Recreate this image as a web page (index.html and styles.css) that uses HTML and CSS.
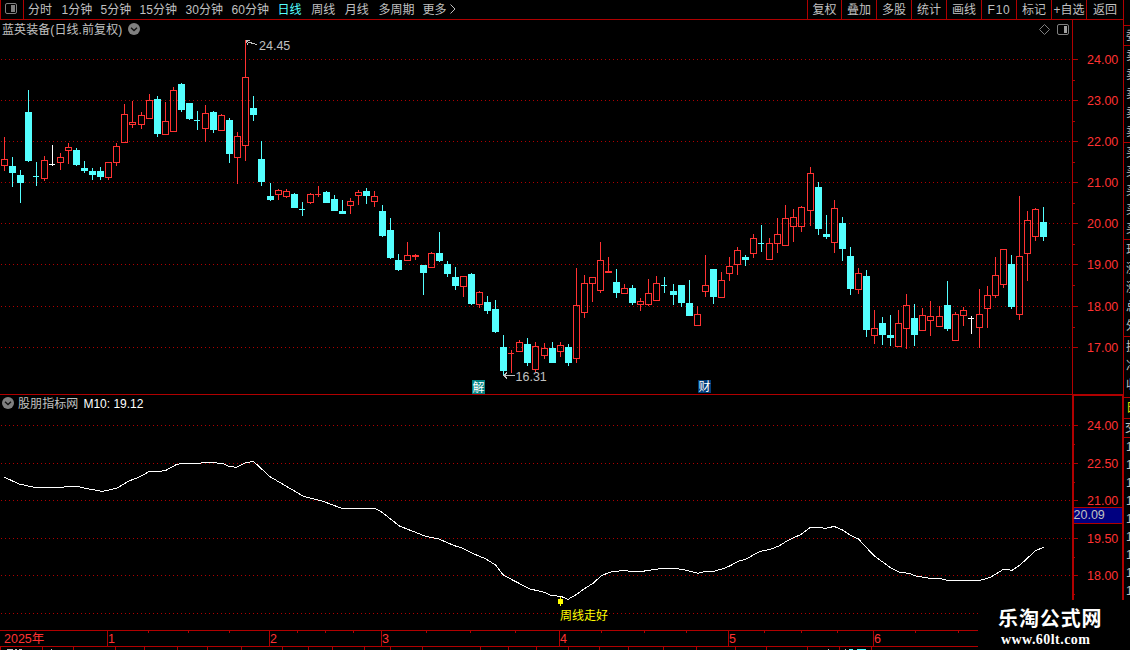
FILE: index.html
```html
<!DOCTYPE html>
<html lang="zh-CN">
<head>
  <meta charset="UTF-8">
  <meta name="viewport" content="width=device-width, initial-scale=1.0">
  <title>蓝英装备 日线</title>
  <link rel="stylesheet" href="styles.css">
</head>
<body>

  <header class="toolbar">
    <div class="layout-btn">
      <svg width="12" height="12" viewBox="0 0 12 12">
        <rect x="0.5" y="0.5" width="11" height="10" rx="1.5" fill="none" stroke="#808080"/>
        <rect x="6" y="2" width="4" height="7" fill="#808080"/>
      </svg>
    </div>
    <nav class="periods">
      <a class="w2">分时</a>
      <a class="w3">1分钟</a>
      <a class="w3">5分钟</a>
      <a class="w4">15分钟</a>
      <a class="w4">30分钟</a>
      <a class="w4">60分钟</a>
      <a class="w2 active">日线</a>
      <a class="w2">周线</a>
      <a class="w2">月线</a>
      <a class="w5">多周期</a>
      <a class="w6">更多</a>
      <svg class="more" width="8" height="10" viewBox="0 0 8 10">
        <path d="M1.5 0.5 L6 5 L1.5 9.5" fill="none" stroke="#c0c0c0"/>
      </svg>
    </nav>
    <nav class="tools">
      <a class="narrow">复权</a>
      <a>叠加</a>
      <a>多股</a>
      <a>统计</a>
      <a>画线</a>
      <a class="latin">F10</a>
      <a>标记</a>
      <a>+自选</a>
      <a class="wide">返回</a>
    </nav>
    <div class="corner"></div>
  </header>

  <main class="workspace">
    <div class="charts">
      <section class="pane">
        <svg id="kline" width="1124" height="375" viewBox="0 20 1124 375"></svg>
        <div class="pane-title">
          <span>蓝英装备(日线.前复权)</span>
          <svg class="toggle" width="12" height="12" viewBox="0 0 12 12">
            <circle cx="6" cy="6" r="6" fill="#808080"/>
            <path d="M3 4.8 L6 7.6 L9 4.8" fill="none" stroke="#101010" stroke-width="1.3"/>
          </svg>
        </div>
        <div class="pane-icons">
          <svg width="12" height="12" viewBox="0 0 12 12">
            <path d="M6.5 0.5 L11.5 5.5 L6.5 10.5 L1.5 5.5 Z" fill="none" stroke="#808080"/>
          </svg>
          <svg width="12" height="12" viewBox="0 0 12 12">
            <rect x="0.5" y="0.5" width="11" height="10" rx="1.5" fill="none" stroke="#808080"/>
            <rect x="7" y="2" width="3" height="7" fill="#a0a0a0"/>
          </svg>
        </div>
      </section>

      <section class="pane">
        <svg id="indicator" width="1124" height="255" viewBox="0 395 1124 255"></svg>
        <div class="pane-title sub">
          <svg width="12" height="12" viewBox="0 0 12 12">
            <circle cx="6" cy="6" r="6" fill="#808080"/>
            <path d="M3 4.8 L6 7.6 L9 4.8" fill="none" stroke="#101010" stroke-width="1.3"/>
          </svg>
          <span class="name">股朋指标网</span>
          <span class="value">M10: 19.12</span>
        </div>
      </section>
    </div>

    <aside class="quotes">
      <div class="block ratio"><p>委</p></div>
      <div class="block"><p>卖</p><p>卖</p><p>卖</p><p>卖</p><p>卖</p></div>
      <div class="block"><p>买</p><p>买</p><p>买</p><p>买</p><p>买</p></div>
      <div class="block"><p>现</p><p>涨</p><p>涨</p><p>总</p><p>外</p></div>
      <div class="block short"><p>换</p><p>净</p><p>收</p></div>
      <div class="block tab"><p>日</p></div>
      <div class="block deal"><p>交</p></div>
      <div class="block ticks"><p>14</p><p>14</p><p>14</p><p>14</p><p>14</p><p>14</p><p>14</p><p>14</p><p>14</p></div>
    </aside>
  </main>

  <div class="watermark">
    <strong>乐淘公式网</strong>
    <span>www.60lt.com</span>
  </div>

  <script src="chart.js"></script>
</body>
</html>
```

FILE: styles.css
```css
* {
  box-sizing: border-box;
}

body {
  margin: 0;
  width: 1130px;
  height: 650px;
  overflow: hidden;
  background: #000;
  color: #c0c0c0;
  font-family: "Liberation Sans", "Noto Sans CJK SC", sans-serif;
  font-size: 12px;
  position: relative;
}

svg {
  display: block;
}

/* toolbar */
.toolbar {
  display: flex;
  height: 20px;
}

.layout-btn {
  width: 24px;
  padding: 3px 0 0 4px;
  border: solid #b00000;
  border-width: 0 1px 1px;
}

.periods {
  flex: 1;
  display: flex;
  gap: 9px;
  padding-left: 4px;
  line-height: 20px;
  white-space: nowrap;
  border-bottom: 1px solid #b00000;
}

.periods .w2 { width: 24.6px; }
.periods .w3 { width: 30px; }
.periods .w4 { width: 37px; }
.periods .w5 { width: 35px; }
.periods .w6 { width: 18px; }

.periods .active {
  color: #54ffff;
}

.more {
  margin-top: 4px;
}

.tools {
  display: flex;
  line-height: 20px;
  border-bottom: 1px solid #b00000;
}

.tools a {
  width: 35px;
  border-left: 1px solid #b00000;
  text-align: center;
  white-space: nowrap;
}

.tools .narrow { width: 34px; }
.tools .wide { width: 37px; }
.tools .latin { letter-spacing: 0.7px; }

.corner {
  width: 7px;
  border-left: 1px solid #b00000;
}

/* charts */
.workspace {
  display: flex;
  height: 630px;
}

.charts {
  width: 1124px;
}

.pane {
  position: relative;
}

.pane-title {
  position: absolute;
  left: 2px;
  top: 2px;
  display: flex;
  gap: 6px;
  line-height: 16px;
}

.pane-title span {
  letter-spacing: 0.08px;
}

.pane-title svg {
  margin-top: 1px;
}

.pane-title.sub {
  top: 1px;
  gap: 4px;
}

.pane-title .value {
  color: #fff;
  letter-spacing: 0;
  margin-left: 1px;
}

.pane-icons {
  position: absolute;
  left: 1038px;
  top: 4px;
  display: flex;
  gap: 7px;
}

#kline,
#indicator {
  shape-rendering: crispEdges;
}

.axis-label {
  fill: #ff3232;
  font-size: 12.5px;
}

.note {
  fill: #c0c0c0;
  font-size: 12.5px;
}

.signal {
  fill: #ffff00;
}

.badge {
  fill: #fff;
  font-size: 12px;
}

/* quotes panel, cut off by the window edge */
.quotes {
  width: 6px;
  height: 580px;
  overflow: hidden;
  padding-top: 5px;
}

.block {
  height: 97px;
  padding: 1px 0 0 2px;
  border-top: 1px solid #b00000;
  overflow: hidden;
}

.block p {
  margin: 0;
  width: 14px;
  height: 19px;
  line-height: 19px;
}

.ratio { height: 20px; }
.short { height: 61px; }
.tab { height: 21px; color: #e0e000; }
.deal { height: 19px; padding-left: 1px; }
.deal p { line-height: 16px; }
.ticks { height: 170px; }
.ticks p { height: 18px; line-height: 17px; }

.watermark {
  position: absolute;
  left: 978px;
  top: 600px;
  width: 152px;
  height: 50px;
  padding: 7px 0 0 20px;
  background: #000;
  color: #fff;
}

.watermark strong {
  display: block;
  font-size: 20px;
  line-height: 24px;
  letter-spacing: 0.9px;
  white-space: nowrap;
}

.watermark span {
  display: block;
  margin-left: 3px;
  font: bold 14px/17px "Liberation Serif", serif;
  letter-spacing: 0.45px;
}
```

FILE: chart.js
```javascript
const RED = '#ff3232';
const CYAN = '#54ffff';
const LINE = '#b00000';

// x, high, body top, body bottom, low, kind (r = up, c = down, w = flat)
const candles = [
  [4,137,159,166,171,'r'],[12,157,166,173,187,'c'],[20,170,175,183,203,'c'],[28,90,112,161,162,'c'],
  [36,162,176,177,186,'c'],[44,156,160,179,181,'r'],[52,145,164,165,166,'w'],[60,153,157,163,170,'r'],
  [68,143,147,151,164,'r'],[76,148,150,165,166,'c'],[84,161,168,171,173,'c'],[92,168,171,175,180,'c'],
  [100,167,171,177,180,'c'],[108,162,162,178,180,'r'],[116,143,146,163,166,'r'],[124,104,114,143,143,'r'],
  [132,101,122,125,128,'r'],[141,112,115,125,129,'r'],[149,94,100,119,119,'r'],[157,96,99,134,137,'c'],
  [165,102,121,135,135,'r'],[173,87,90,132,132,'r'],[181,83,84,110,112,'c'],[189,103,103,119,120,'c'],
  [197,111,120,121,130,'c'],[205,105,113,129,142,'r'],[213,111,112,130,133,'c'],[221,114,115,131,131,'r'],
  [229,118,120,154,163,'c'],[237,132,136,158,184,'r'],[245,40,77,146,161,'r'],[253,96,108,115,121,'c'],
  [261,141,159,182,186,'c'],[270,183,196,200,201,'c'],[278,189,190,195,200,'r'],[286,189,191,197,198,'r'],
  [294,193,194,208,208,'c'],[302,202,209,210,216,'c'],[310,193,194,203,204,'r'],[318,186,194,195,197,'r'],
  [326,191,192,203,203,'c'],[334,195,199,211,211,'c'],[342,200,211,214,214,'c'],[350,198,201,206,214,'r'],
  [358,190,192,196,205,'r'],[366,188,191,196,204,'c'],[374,191,196,202,207,'r'],[382,205,211,236,237,'c'],
  [390,218,230,258,259,'c'],[398,254,260,270,271,'c'],[407,242,255,261,261,'r'],[415,254,255,257,260,'r'],
  [423,265,265,273,295,'c'],[431,252,253,268,268,'r'],[439,232,253,261,262,'c'],[447,261,264,274,277,'c'],
  [455,267,277,286,290,'c'],[463,276,276,287,297,'r'],[471,273,274,304,305,'c'],[479,291,292,305,308,'r'],
  [487,296,302,311,314,'c'],[495,300,309,332,333,'c'],[503,335,347,371,376,'c'],[511,350,353,354,373,'r'],
  [519,340,342,352,352,'r'],[527,338,344,363,366,'c'],[535,342,346,370,372,'r'],[544,343,348,356,359,'r'],
  [552,342,348,363,363,'c'],[560,342,345,352,357,'r'],[568,344,347,363,366,'c'],[576,268,305,359,363,'r'],
  [584,275,283,313,318,'r'],[592,277,277,284,302,'r'],[600,242,260,291,293,'r'],[608,257,271,273,273,'r'],
  [616,269,282,293,298,'c'],[624,284,288,294,294,'r'],[632,285,288,303,305,'c'],[640,298,301,305,311,'r'],
  [648,279,293,305,306,'r'],[656,276,283,301,301,'r'],[664,277,285,286,293,'c'],[673,284,291,295,305,'c'],
  [681,285,285,303,307,'c'],[689,280,303,316,316,'c'],[697,306,314,326,326,'r'],[705,255,285,292,297,'r'],
  [713,269,269,297,304,'c'],[721,272,280,298,298,'r'],[729,257,266,274,281,'r'],[737,247,250,265,275,'r'],
  [745,255,257,260,266,'c'],[753,234,238,254,258,'r'],[761,225,243,244,252,'c'],[769,238,243,260,260,'r'],
  [777,218,234,244,253,'r'],[785,205,218,246,246,'r'],[793,209,217,227,242,'r'],[801,206,207,227,232,'r'],
  [810,167,173,211,226,'r'],[818,182,187,229,235,'c'],[826,215,234,237,239,'c'],[834,200,208,243,253,'r'],
  [842,217,223,249,261,'c'],[850,247,256,289,295,'c'],[858,268,273,290,294,'r'],[866,270,276,330,337,'c'],
  [874,310,328,336,344,'r'],[882,317,323,335,345,'c'],[890,315,335,338,346,'c'],[898,310,323,347,347,'r'],
  [906,294,305,329,349,'r'],[914,304,318,335,346,'c'],[922,308,315,331,331,'r'],[930,301,316,321,336,'r'],
  [939,306,316,327,327,'r'],[947,281,305,329,331,'c'],[955,312,314,341,341,'r'],[963,307,310,316,326,'r'],
  [971,316,318,319,334,'w'],[979,289,314,328,348,'r'],[987,286,295,309,328,'r'],[995,257,275,296,298,'r'],
  [1003,249,249,285,288,'r'],[1011,255,264,307,309,'c'],[1019,196,256,315,320,'r'],[1027,211,220,254,281,'r'],
  [1035,208,209,237,241,'r'],[1043,207,222,237,241,'c']
];

const m10 = [
  [4,477],[19,484],[35,487.4],[63,487.4],[66,486.4],[78,486.4],[85,488.3],[102,491.3],[108,490.3],[117,488],
  [129,481],[140,476.7],[149,471.6],[160,471.4],[166,470.3],[176,464.7],[182,463.4],[200,463.4],[203,462.5],
  [210,462.5],[223,463.4],[228,466],[236,467.4],[245.5,462.7],[253.5,461.4],[270,476.7],[303.5,496.3],
  [323,501.3],[342,508.4],[375,508.4],[382,512.3],[399.5,526],[425.5,536.3],[438,538.7],[454.5,545.7],
  [463,548.3],[471,552.7],[486,559],[495.5,565],[503.5,575.3],[519,583.3],[529,588.7],[544,592.3],[551,595.3],
  [561,596.4],[568,599.4],[576,594.7],[584,589],[593,583.3],[602,575.3],[611,572],[624,570.4],[631,571.4],
  [642,571.4],[653,569.7],[663,568.4],[675.5,568.4],[686.6,570.3],[698,573.3],[704.5,571.7],[713.5,571.4],
  [724.5,568.3],[731,565.3],[738,561.3],[745.5,559.3],[760,551.4],[771.5,549],[779.5,545.7],[788,540.3],
  [800.5,534.7],[810,527.6],[820.5,527.4],[825,528.6],[834,526.4],[842,529.7],[850.5,535.3],[858.5,539],
  [874,555.7],[890,567.3],[900,572.5],[910,573.4],[915,575.8],[930,578.4],[940,578.5],[948,580.4],[980,580.4],
  [990,577.5],[1004,569],[1012,570.3],[1020,565],[1036,550.3],[1044,547.3]
];

function rect(x, y, w, h, fill) {
  return `<rect x="${x}" y="${y}" width="${w}" height="${h}" fill="${fill}"/>`;
}

function text(x, y, str, cls) {
  return `<text x="${x}" y="${y}" class="${cls}">${str}</text>`;
}

function grid(y, right) {
  return `<line x1="1" x2="${right}" y1="${y + 0.5}" y2="${y + 0.5}" stroke="${LINE}" stroke-dasharray="1 3"/>`;
}

function candle([x, high, top, bottom, low, kind]) {
  const color = { r: RED, c: CYAN, w: '#ffffff' }[kind];
  const h = bottom - top;
  let out = rect(x, high, 1, top - high, color) + rect(x, bottom, 1, low - bottom, color);
  if (h === 1) {
    out += rect(x - 3, top, 6, 1, color);
  } else if (kind === 'r' && h > 2) {
    out += `<rect x="${x - 2.5}" y="${top + 0.5}" width="6" height="${h - 1}" fill="none" stroke="${RED}"/>`;
  } else {
    out += rect(x - 3, top, 7, h, color);
  }
  return out;
}

function drawKline() {
  let out = '';
  [59, 100, 141, 182, 223, 264, 306, 347].forEach((y, i) => {
    out += grid(y, 1072) + rect(1073, y, 5, 1, LINE);
    out += text(1087, y + 5, (24 - i).toFixed(2), 'axis-label');
  });
  [80, 121, 162, 203, 244, 285, 327].forEach(y => { out += rect(1073, y, 2, 1, LINE); });
  out += candles.map(candle).join('');

  // high and low marks
  out += '<path d="M257 44.5 L246 41.5 M250 40.5 L246 41 L248 44.5" fill="none" stroke="#c0c0c0"/>';
  out += text(259, 50, '24.45', 'note');
  out += '<path d="M504 375.5 H515 M507 372.5 L504 375.5 L507 378.5" fill="none" stroke="#c0c0c0"/>';
  out += text(515.5, 381, '16.31', 'note');

  // event badges
  out += rect(472, 380, 13, 14, '#008080') + text(472.5, 391.5, '解', 'badge');
  out += rect(698, 380, 13, 13, '#003c78') + text(698.5, 391, '财', 'badge');

  out += rect(1072, 20, 1, 375, LINE) + rect(1123, 20, 1, 375, LINE) + rect(0, 394, 1124, 1, LINE);
  document.getElementById('kline').innerHTML = out;
}

function drawIndicator() {
  let out = '';
  [425, 463, 500, 538, 575, 613].forEach((y, i) => {
    out += grid(y, y === 613 ? 978 : 1072);
    if (y !== 613) {
      out += rect(1074, y, 4, 1, LINE) + text(1087, y + 5, (24 - i * 1.5).toFixed(2), 'axis-label');
    }
  });
  [444, 482, 557, 594].forEach(y => { out += rect(1074, y, 1, 1, LINE); });
  out += rect(1072, 395, 52, 1, LINE) + rect(1072, 395, 2, 205, LINE) + rect(1122, 395, 2, 205, LINE);

  // cursor price
  out += rect(1074, 507, 48, 17, LINE) + rect(1074, 508, 48, 15, '#000080');
  out += text(1073.5, 519, '20.09', 'note');

  out += `<polyline points="${m10.join(' ')}" fill="none" stroke="#ffffff"/>`;
  out += rect(558, 599, 5, 5, '#ffff00') + rect(560, 597, 1, 9, '#ffff00');
  out += text(560, 620, '周线走好', 'signal');

  // date axis
  out += rect(0, 630, 978, 1, LINE) + rect(0, 646, 978, 1, LINE);
  out += text(4, 643, '2025年', 'axis-label');
  [107, 269, 381, 559, 728, 873].forEach((x, i) => {
    out += rect(x, 631, 1, 15, LINE) + text(x + 1, 643, i + 1, 'axis-label');
  });
  [148, 188, 229, 297, 325, 353, 426, 470, 515, 601, 644, 686, 764, 801, 837, 915, 958].forEach(x => {
    out += rect(x, 631, 1, 2, LINE);
  });

  // tab row below the axis
  [0, 42, 73, 115, 144, 177, 207, 241, 282, 308, 332, 364, 390, 422, 480, 508, 536, 568, 599, 628, 663, 696,
    735, 766, 807, 839, 871].forEach(x => { out += rect(x, 647, 1, 3, LINE); });
  [[7, 6], [15, 2], [19, 3], [51, 1], [828, 1], [845, 1]].forEach(([x, w]) => { out += rect(x, 649, w, 1, '#c0c0c0'); });
  out += rect(849, 649, 4, 1, CYAN) + rect(857, 649, 9, 1, CYAN);
  document.getElementById('indicator').innerHTML = out;
}

drawKline();
drawIndicator();
```
